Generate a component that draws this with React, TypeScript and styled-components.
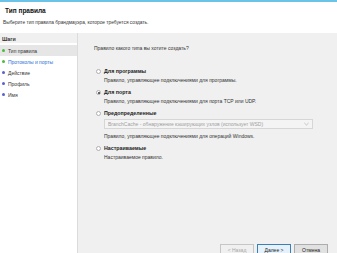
import styled, { createGlobalStyle } from "styled-components";

const GlobalStyle = createGlobalStyle`
  html, body {
    margin: 0;
    padding: 0;
    background: #ffffff;
  }
  body {
    font-family: "Liberation Sans", Arial, sans-serif;
  }
`;

const steps = [
  { label: "Тип правила", done: true, active: true, current: false },
  { label: "Протоколы и порты", done: true, active: false, current: true },
  { label: "Действие", done: false, active: false, current: false },
  { label: "Профиль", done: false, active: false, current: false },
  { label: "Имя", done: false, active: false, current: false },
];

const options = [
  {
    title: "Для программы",
    text: "Правило, управляющее подключениями для программы.",
    checked: false,
    select: false,
  },
  {
    title: "Для порта",
    text: "Правило, управляющее подключениями для порта TCP или UDP.",
    checked: true,
    select: false,
  },
  {
    title: "Предопределенные",
    text: "Правило, управляющее подключениями для операций Windows.",
    checked: false,
    select: true,
  },
  {
    title: "Настраиваемые",
    text: "Настраиваемое правило.",
    checked: false,
    select: false,
  },
];

export default function App() {
  return (
    <>
      <GlobalStyle />
      <Window>
        <Stripe />
        <Header>
          <Title>Тип правила</Title>
          <Subtitle>Выберите тип правила брандмауэра, которое требуется создать.</Subtitle>
        </Header>
        <Body>
          <Sidebar>
            <StepsHeader>Шаги</StepsHeader>
            {steps.map((s) => (
              <Step key={s.label} $active={s.active} $current={s.current}>
                <Bullet $done={s.done} />
                {s.label}
              </Step>
            ))}
          </Sidebar>
          <Main>
            <Question>Правило какого типа вы хотите создать?</Question>
            <Options>
              {options.map((o) => (
                <Option key={o.title}>
                  <OptionRow>
                    <Radio $checked={o.checked} />
                    <OptionTitle>{o.title}</OptionTitle>
                  </OptionRow>
                  {o.select && (
                    <Select>
                      <span>BranchCache - обнаружение кэширующих узлов (использует WSD)</span>
                      <Chevron viewBox="0 0 6 4">
                        <path d="M0.5 0.8 L3 3.2 L5.5 0.8" fill="none" stroke="#a0a0a0" strokeWidth="0.7" />
                      </Chevron>
                    </Select>
                  )}
                  <OptionText>{o.text}</OptionText>
                </Option>
              ))}
            </Options>
            <Buttons>
              <Btn $disabled>&lt; Назад</Btn>
              <Btn $primary>Далее &gt;</Btn>
              <Btn>Отмена</Btn>
            </Buttons>
          </Main>
        </Body>
      </Window>
    </>
  );
}

const Window = styled.div`
  width: 337px;
  height: 253px;
  display: flex;
  flex-direction: column;
  overflow: hidden;
  background: #ffffff;
`;

const Stripe = styled.div`
  height: 2px;
  background: #6cc3ea;
`;

const Header = styled.div`
  height: 31px;
  padding: 5px 0 0 5px;
  box-sizing: border-box;
  background: #ffffff;
`;

const Title = styled.div`
  font-size: 6.5px;
  font-weight: bold;
  color: #111111;
  line-height: 8px;
`;

const Subtitle = styled.div`
  margin-top: 5px;
  margin-left: -2px;
  font-size: 4.8px;
  color: #333333;
  line-height: 6px;
`;

const Body = styled.div`
  flex: 1;
  display: flex;
  min-height: 0;
`;

const Sidebar = styled.div`
  width: 77px;
  background: #ffffff;
  border-right: 1px solid #dcdcdc;
  display: flex;
  flex-direction: column;
`;

const StepsHeader = styled.div`
  height: 11px;
  background: #f0f0f0;
  font-size: 5.3px;
  font-weight: bold;
  color: #333333;
  padding: 3px 0 0 2px;
  box-sizing: border-box;
  border-bottom: 1px solid #ffffff;
  margin-bottom: 1px;
`;

const Step = styled.div<{ $active: boolean; $current: boolean }>`
  height: 11px;
  display: flex;
  align-items: center;
  gap: 3px;
  padding-left: 2px;
  font-size: 5px;
  color: ${(p) => (p.$current ? "#2a6fd6" : "#333333")};
  background: ${(p) => (p.$active ? "#e6e6e6" : "transparent")};
`;

const Bullet = styled.span<{ $done: boolean }>`
  width: 3px;
  height: 3px;
  border-radius: 50%;
  background: ${(p) => (p.$done ? "#4cbb3c" : "#5a62c8")};
`;

const Main = styled.div`
  flex: 1;
  background: #f0f0f0;
  display: flex;
  flex-direction: column;
  padding: 12px 0 0 16px;
  box-sizing: border-box;
`;

const Question = styled.div`
  font-size: 5px;
  color: #333333;
  line-height: 6px;
`;

const Options = styled.div`
  margin-top: 16px;
  display: flex;
  flex-direction: column;
  gap: 5px;
`;

const Option = styled.div`
  display: flex;
  flex-direction: column;
`;

const OptionRow = styled.div`
  display: flex;
  align-items: center;
  gap: 3px;
  margin-left: 2px;
  height: 8px;
`;

const Radio = styled.span<{ $checked: boolean }>`
  width: 5px;
  height: 5px;
  border-radius: 50%;
  border: 0.6px solid #b0b0b0;
  background: #ffffff;
  box-sizing: border-box;
  position: relative;
  &::after {
    content: "";
    display: ${(p) => (p.$checked ? "block" : "none")};
    position: absolute;
    left: 1px;
    top: 1px;
    width: 2px;
    height: 2px;
    border-radius: 50%;
    background: #333333;
  }
`;

const OptionTitle = styled.span`
  font-size: 5.3px;
  font-weight: bold;
  color: #222222;
`;

const OptionText = styled.div`
  margin-left: 10px;
  margin-top: 2px;
  font-size: 5px;
  color: #333333;
  line-height: 6px;
`;

const Select = styled.div`
  margin: 2px 0 2px 10px;
  width: 209px;
  height: 10px;
  box-sizing: border-box;
  border: 1px solid #d6d6d6;
  background: #f4f4f4;
  display: flex;
  align-items: center;
  justify-content: space-between;
  padding: 0 3px;
  font-size: 5px;
  color: #a0a0a0;
`;

const Chevron = styled.svg`
  width: 5px;
  height: 4px;
`;

const Buttons = styled.div`
  margin-top: auto;
  display: flex;
  justify-content: flex-end;
  gap: 3px;
  padding-right: 9px;
  margin-bottom: -3px;
`;

const Btn = styled.div<{ $primary?: boolean; $disabled?: boolean }>`
  width: 34px;
  height: 12px;
  box-sizing: border-box;
  display: flex;
  align-items: center;
  justify-content: center;
  font-size: 5px;
  color: ${(p) => (p.$disabled ? "#a8a8a8" : "#222222")};
  background: ${(p) => (p.$primary ? "#e5f1fb" : p.$disabled ? "#f0f0f0" : "#e1e1e1")};
  border: 1px solid
    ${(p) => (p.$primary ? "#3c7fb1" : p.$disabled ? "#c6c6c6" : "#adadad")};
`;
